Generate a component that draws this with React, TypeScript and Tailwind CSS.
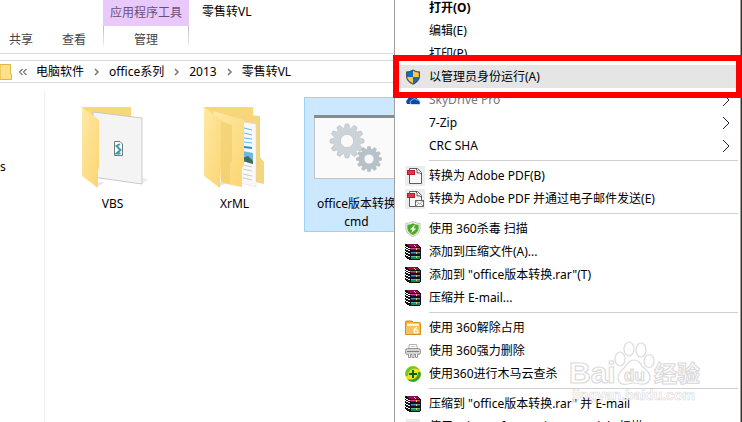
import { useState, type ReactNode } from "react";

type MenuEntry = {
  label?: string;
  icon?: ReactNode;
  bold?: boolean;
  muted?: boolean;
  submenu?: boolean;
  highlighted?: boolean;
};

function ShieldIcon() {
  return (
    <svg viewBox="0 0 16 16" className="h-4 w-4">
      <path d="M8 .5Q11 2.4 15 2.6V8Q14.4 13 8 15.7Q1.6 13 1 8V2.6Q5 2.4 8 .5Z" fill="#4c5157" />
      <path d="M8 1.8V8H2.2V3.8Q5.6 3.4 8 1.8Z" fill="#0b6fd0" />
      <path d="M8 1.8Q10.4 3.4 13.8 3.8V8H8Z" fill="#ffc73a" />
      <path d="M2.2 8H8V14.4Q2.8 12 2.2 8Z" fill="#ffc73a" />
      <path d="M8 8H13.8Q13.2 12 8 14.4Z" fill="#0b6fd0" />
    </svg>
  );
}

function CloudIcon() {
  return (
    <svg viewBox="0 0 16 16" className="h-4 w-4">
      <path d="M2 12Q0 9 3 7Q4 2 8 4Q12 3 12 7Q16 8 14 12Z" fill="#0a48ad" />
      <path d="M6 12.500Q4 9 7 8Q9 5 12 8Q16 8 15 12.500Z" fill="#0a48ad" stroke="#fff" strokeWidth=".6" />
    </svg>
  );
}

function PdfIcon({ mail = false }: { mail?: boolean }) {
  return (
    <svg viewBox="0 0 20 20" className="ml-1 h-5 w-5">
      <rect width="20" height="20" fill="#ededed" />
      <path d="M4.500 2.500H12.500L16.500 6.500V17.500H4.500Z" fill="#f8f8f8" stroke="#5c5c5c" />
      <path d="M10.500 2.500Q13 3.500 12 7Q15 6 16.500 8.500" fill="none" stroke="#5c5c5c" />
      <rect x="2.500" y="4.500" width="7" height="4" fill="#e2344a" stroke="#b51c2e" />
      {mail && (
        <>
          <rect x="10.500" y="11.500" width="8" height="6" fill="#fff" stroke="#666" />
          <path d="M10.500 11.500L14.500 15L18.500 11.500M10.500 17.500L13.500 14.500M18.500 17.500L15.500 14.500" fill="none" stroke="#777" strokeWidth=".8" />
        </>
      )}
    </svg>
  );
}

function AntivirusIcon() {
  return (
    <svg viewBox="0 0 16 16" className="h-4 w-4">
      <path d="M8 0Q11 2 15.500 2V8Q14.500 13.500 8 16Q1.500 13.500 .5 8V2Q5 2 8 0Z" fill="#b8bdb4" />
      <path d="M8 1Q11 2.800 14.600 2.800V8Q13.600 12.900 8 15.100Q2.400 12.900 1.400 8V2.800Q5 2.800 8 1Z" fill="#f3f6ef" />
      <path d="M8 2.200Q10.600 3.800 13.600 3.800V8Q12.600 12.200 8 14Q3.400 12.200 2.400 8V3.800Q5.400 3.800 8 2.200Z" fill="#4caa22" />
      <path d="M10 3.500L5 8.400H7.600L6.200 12.200L11.400 7.400H8.800Z" fill="#fff" />
    </svg>
  );
}

function RarIcon() {
  return (
    <svg viewBox="0 0 16 16" className="h-4 w-4" shapeRendering="crispEdges">
      <path d="M0 0H12L16 4V15H15V16H5L0 13Z" fill="#141018" />
      <path d="M1 0H11L14 3H5Z" fill="#8e1050" />
      <path d="M5 4H15V5H5Z" fill="#d23f88" />
      <path d="M6 5H15V6H6Z" fill="#8e1050" />
      <path d="M6 8H15V9H6Z" fill="#3f8ee0" />
      <path d="M6 9H15V10H6Z" fill="#12509c" />
      <path d="M6 12H15V13H6Z" fill="#3ec795" />
      <path d="M6 13H15V15H6Z" fill="#0f8a5c" />
      <path d="M0 2H1V3H3V4H5V5H3V4H1V3H0ZM0 4H1V5H3V6H5V7H3V6H1V5H0ZM0 7H1V8H3V9H5V10H3V9H1V8H0ZM0 10H1V11H3V12H5V13H3V12H1V11H0Z" fill="#fff" />
      <path d="M9 1H10V2H11V3H10V2H9ZM11 4H12V6H11ZM11 8H12V10H11ZM11 12H12V14H11Z" fill="#e6c75a" />
    </svg>
  );
}

function UnlockFolderIcon() {
  return (
    <svg viewBox="0 0 16 16" className="h-4 w-4">
      <path d="M.5 2Q.5 1 1.500 1H7L8.500 2.500H14.500Q15.500 2.500 15.500 3.500V14.500H.5Z" fill="#f2ad3c" stroke="#d98b25" />
      <path d="M2 3.500H14V6H2Z" fill="#fff3c8" />
      <path d="M1 6H15V14H1Z" fill="#f8c356" />
      <path d="M12 7.500Q9 8 9 10.500Q9 13 11 13Q13 13 13 11.400Q13 9.800 11.300 9.800Q10 9.800 9.500 10.500" fill="none" stroke="#fff" strokeWidth="1.200" />
    </svg>
  );
}

function ShredderIcon() {
  return (
    <svg viewBox="0 0 16 16" className="h-4 w-4">
      <path d="M3.500 6L4.500 1.500H11.500L12.500 6" fill="#fff" stroke="#b0b0b0" />
      <path d="M5.500 3.500H10.500" stroke="#ccc" />
      <rect x=".5" y="5.500" width="15" height="6" rx="2" fill="#d4d4d4" stroke="#929292" />
      <path d="M2 8.500H14" stroke="#808080" />
      <path d="M3.500 11V14.500H5.500V11M7 11V14.500H9V11M10.500 11V14.500H12.500V11" fill="#fff" stroke="#888" strokeWidth=".9" />
    </svg>
  );
}

function PlusBallIcon() {
  return (
    <svg viewBox="0 0 16 16" className="h-4 w-4">
      <circle cx="8" cy="8" r="7.900" fill="#f6e11c" />
      <path d="M.2 9Q0 3 5 .8Q11-1 14.500 4Q9 1 5.500 4Q3 6 3 10Q1 11 .2 9Z" fill="#6cc62e" />
      <path d="M15.900 7Q16 13 10.500 15.500Q5 17 2 13Q7 14.500 10.500 12Q13 10 13 6Q15 5 15.900 7Z" fill="#37a12a" />
      <path d="M8 4V12M4 8H12" stroke="#145c14" strokeWidth="2" />
    </svg>
  );
}

function PlayerIcon() {
  return (
    <svg viewBox="0 0 16 16" className="h-4 w-4">
      <rect x="1" y="0" width="14" height="16" fill="#ececec" />
    </svg>
  );
}

function VbsFolder() {
  return (
    <svg viewBox="0 0 72 84" className="ml-1 h-[84px] w-[72px]">
      <defs>
        <linearGradient id="vbsFront" x2="1" y2="1">
          <stop stopColor="#ffe9a6" />
          <stop offset="1" stopColor="#fbd571" />
        </linearGradient>
      </defs>
      <path d="M60 76L66 73Q72 75 62 78Z" fill="#ececec" />
      <path d="M16 78L26 77Q22 80 16 82Z" fill="#e3e3e3" />
      <path d="M3 2H52V60H12Z" fill="#f8d778" />
      <path d="M14 7L63 13V79L14 72Z" fill="#f4f4f4" stroke="#c9c9c9" />
      <path d="M3 2L20 15V62L19 65V83L3 71Z" fill="url(#vbsFront)" />
      <path d="M35.500 36.500H41L43.500 39V50.500H35.500Z" fill="#fff" stroke="#777" />
      <path d="M41 39L37.500 41L41.500 45L37.500 48.500H41.500" fill="none" stroke="#3a9faa" strokeWidth="2" />
    </svg>
  );
}

function XrmlFolder() {
  return (
    <svg viewBox="0 0 72 84" className="ml-1 h-[84px] w-[72px]">
      <defs>
        <linearGradient id="xrmlFront" x2="1" y2="1">
          <stop stopColor="#ffe9a6" />
          <stop offset="1" stopColor="#fbd571" />
        </linearGradient>
      </defs>
      <path d="M16 78L26 76Q24 80 16 82Z" fill="#e3e3e3" />
      <path d="M3 2H52V60H12Z" fill="#f8d778" />
      <path d="M30 8L59 11V52L63 57V79L40 74Z" fill="#f5d67f" />
      <path d="M36 16L55 19V82L36 77Z" fill="#f8f8f8" stroke="#d9d9d9" strokeWidth=".5" />
      <path d="M43 23L51 25M43 28L51 30M43 33L51 34M43 37L51 38" stroke="#6bb6dd" />
      <path d="M43 42L51 43" stroke="#238fd0" strokeWidth="2" />
      <path d="M42 46L52 48V59L42 56Z" fill="#6db7e2" />
      <path d="M42 53L47 51L52 56V59L42 56Z" fill="#426a5e" />
      <path d="M42 60L51 62M42 64L51 66M42 69L51 71M42 73L51 75" stroke="#ccc" />
      <path d="M12 6L43 15V60L41 63V82L20 78Z" fill="url(#xrmlFront)" />
      <path d="M20 16L31 20V56L29 59V79L20 76Z" fill="#eecb69" opacity=".6" />
      <path d="M3 2L20 15V62L19 65V83L3 71Z" fill="url(#xrmlFront)" />
    </svg>
  );
}

function Gear({ x, y, r, fill }: { x: number; y: number; r: number; fill: string }) {
  const teeth = Array.from({ length: 12 }, (_, i) => i * 30);
  return (
    <g transform={`translate(${x} ${y})`}>
      {teeth.map((angle) => (
        <path
          key={angle}
          d={`M${-r * 0.18} ${-r * 0.7}L${-r * 0.1} ${-r}H${r * 0.1}L${r * 0.18} ${-r * 0.7}Z`}
          fill={fill}
          stroke="#aab3b9"
          strokeWidth=".5"
          transform={`rotate(${angle})`}
        />
      ))}
      <circle r={r * 0.6} fill="none" stroke={fill} strokeWidth={r * 0.42} />
      <circle r={r * 0.39} fill="#fafafa" stroke="#aab3b9" strokeWidth=".6" />
    </g>
  );
}

function CmdIcon() {
  return (
    <svg viewBox="0 0 86 64" className="h-16 w-[86px]">
      <rect x=".5" y=".5" width="85" height="63" fill="#fafafa" stroke="#bfc5c9" />
      <rect width="86" height="3" fill="#858c90" />
      <Gear x={33} y={26} r={17} fill="#ccd4da" />
      <Gear x={55} y={44} r={12.5} fill="#b7c1c8" />
    </svg>
  );
}

const tabs = ["共享", "查看"];
const crumbs = ["电脑软件", "office系列", "2013", "零售转VL"];

const files = [
  { lines: ["VBS"], icon: <VbsFolder /> },
  { lines: ["XrML"], icon: <XrmlFolder /> },
  { lines: ["office版本转换", "cmd"], icon: <CmdIcon /> },
];

const menuGroups: MenuEntry[][] = [
  [
    { label: "打开(O)", bold: true },
    { label: "编辑(E)" },
    { label: "打印(P)" },
    { label: "以管理员身份运行(A)", icon: <ShieldIcon />, highlighted: true },
    { label: "SkyDrive Pro", icon: <CloudIcon />, muted: true, submenu: true },
    { label: "7-Zip", submenu: true },
    { label: "CRC SHA", submenu: true },
  ],
  [
    { label: "转换为 Adobe PDF(B)", icon: <PdfIcon /> },
    { label: "转换为 Adobe PDF 并通过电子邮件发送(E)", icon: <PdfIcon mail /> },
  ],
  [
    { label: "使用 360杀毒 扫描", icon: <AntivirusIcon /> },
    { label: "添加到压缩文件(A)...", icon: <RarIcon /> },
    { label: '添加到 "office版本转换.rar"(T)', icon: <RarIcon /> },
    { label: "压缩并 E-mail...", icon: <RarIcon /> },
  ],
  [
    { label: "使用 360解除占用", icon: <UnlockFolderIcon /> },
    { label: "使用 360强力删除", icon: <ShredderIcon /> },
    { label: "使用360进行木马云查杀", icon: <PlusBallIcon /> },
  ],
  [
    { label: '压缩到 "office版本转换.rar" 并 E-mail', icon: <RarIcon /> },
    { label: "使用 Microsoft Security Essentials 扫描", icon: <PlayerIcon /> },
  ],
];

function Ribbon() {
  return (
    <header className="flex h-[54px] items-end border-b border-[#dadbdc] text-[#444]">
      {tabs.map((tab) => (
        <button key={tab} className="h-[27px] w-[53px] pl-[9px] text-left">
          {tab}
        </button>
      ))}
      <div className="-ml-[3px] w-[86px] shrink-0">
        <div className="flex h-[27px] items-center justify-center bg-[#e9c9fb] text-[#6b5078]">应用程序工具</div>
        <div className="flex h-[27px] items-start justify-between">
          <span className="h-5 w-px bg-gradient-to-b from-[#bbb] to-[#eee]" />
          <button className="h-full flex-1">管理</button>
          <span className="h-5 w-px bg-gradient-to-b from-[#bbb] to-[#eee]" />
        </div>
      </div>
      <h1 className="self-start pt-[3px] pl-[13px] text-black">零售转VL</h1>
    </header>
  );
}

function AddressBar() {
  return (
    <nav className="mt-1.5 flex h-[23px] items-center border-y border-[#d9d9d9]">
      <svg viewBox="0 0 12 16" className="h-4 w-3">
        <path d="M0 .5H10.500V10H11.500V15.500H0Z" fill="#ffe08a" stroke="#e3b73c" />
      </svg>
      <svg viewBox="0 0 24 8" className="h-2 w-6">
        <path d="M10.500 1L7.500 4L10.500 7M14.500 1L11.500 4L14.500 7" fill="none" stroke="#777" strokeWidth="1.200" />
      </svg>
      {crumbs.map((crumb, i) => (
        <span key={crumb} className="flex items-center">
          {i > 0 && (
            <svg viewBox="0 0 25 8" className="h-2 w-[25px]">
              <path d="M11 1L14 4L11 7" fill="none" stroke="#777" strokeWidth="1.500" />
            </svg>
          )}
          <a href="#">{crumb}</a>
        </span>
      ))}
    </nav>
  );
}

function ContextMenu() {
  return (
    <div role="menu" className="relative w-[347px] shrink-0 border-x border-[#a0a0a0] bg-white">
      <div className="-mt-1">
        {menuGroups.map((group, g) => (
          <div key={g}>
            {g > 0 && <div className="my-[3px] mr-0.5 ml-[34px] h-px bg-[#d0d0d0]" />}
            {group.map((entry) => (
              <div key={entry.label} className="relative">
                <button
                  role="menuitem"
                  className={`flex h-[23px] w-full items-center text-left whitespace-nowrap ${
                    entry.highlighted ? "bg-[#e5e5e5]" : ""
                  } ${entry.bold ? "font-bold" : ""} ${entry.muted ? "text-[#777]" : ""}`}
                >
                  <span className="flex w-[34px] shrink-0 justify-center pl-0.5">{entry.icon}</span>
                  <span className="flex-1">{entry.label}</span>
                  {entry.submenu && (
                    <svg viewBox="0 0 8 14" className="mr-2.5 h-3.5 w-2">
                      <path d="M1 1L7 7L1 13" fill="none" stroke="#3d1440" />
                    </svg>
                  )}
                </button>
                {entry.highlighted && (
                  <div className="pointer-events-none absolute -inset-x-0.5 -inset-y-2.5 z-10 border-[6px] border-[#f00]" />
                )}
              </div>
            ))}
          </div>
        ))}
      </div>
    </div>
  );
}

function Watermark() {
  return (
    <svg
      viewBox="0 0 136 66"
      className="pointer-events-none absolute right-9 bottom-4 h-[66px] w-[136px] font-bold"
      fill="#fff"
      stroke="#d6d6d6"
      strokeWidth="1.200"
      opacity=".85"
    >
      <text x="-1" y="43" fontSize="30" className="font-['Liberation_Sans',sans-serif]">Bai</text>
      <ellipse cx="50" cy="19" rx="5" ry="7" />
      <ellipse cx="59" cy="9" rx="5" ry="7" />
      <ellipse cx="71" cy="10" rx="5" ry="7" />
      <ellipse cx="79" cy="21" rx="5" ry="6.500" />
      <path d="M64 20Q69 20 72 26Q81 33 80 39Q78 45 70 44Q64 42 58 44Q49 46 48 38Q48 33 55 27Q59 20 64 20Z" />
      <text x="54" y="41" fontSize="17" className="font-['Liberation_Sans',sans-serif]">du</text>
      <text x="84" y="42" fontSize="23">经验</text>
      <text x="2" y="60" fontSize="14" strokeWidth=".6" className="font-['Liberation_Sans',sans-serif]">jingyan.baidu.com</text>
    </svg>
  );
}

export default function App() {
  const [selected, setSelected] = useState(2);

  return (
    <div className="relative flex h-screen overflow-hidden bg-white font-['Noto_Sans','Noto_Sans_CJK_SC',sans-serif] text-[12px] leading-[18px] text-black">
      <main className="flex min-w-0 flex-1 flex-col overflow-hidden whitespace-nowrap">
        <Ribbon />
        <AddressBar />
        <div className="flex flex-1">
          <aside className="mt-2 w-[45px] shrink-0 border-r border-[#f0f0f0] pt-[67px]">s</aside>
          <div className="flex items-start gap-[17px] pt-3.5 pl-[15px]">
            {files.map((file, i) => (
              <button
                key={file.lines[0]}
                onClick={() => setSelected(i)}
                className={`flex h-[135px] w-[105px] shrink-0 flex-col items-center border ${
                  selected === i ? "border-[#99d1ff] bg-[#cce8ff]" : "border-transparent"
                }`}
              >
                <span className="flex h-[97px] items-center">{file.icon}</span>
                {file.lines.map((line) => (
                  <span key={line}>{line}</span>
                ))}
              </button>
            ))}
          </div>
        </div>
      </main>
      <ContextMenu />
      <div className="w-px shrink-0 bg-[#2c332c]" />
      <Watermark />
    </div>
  );
}
